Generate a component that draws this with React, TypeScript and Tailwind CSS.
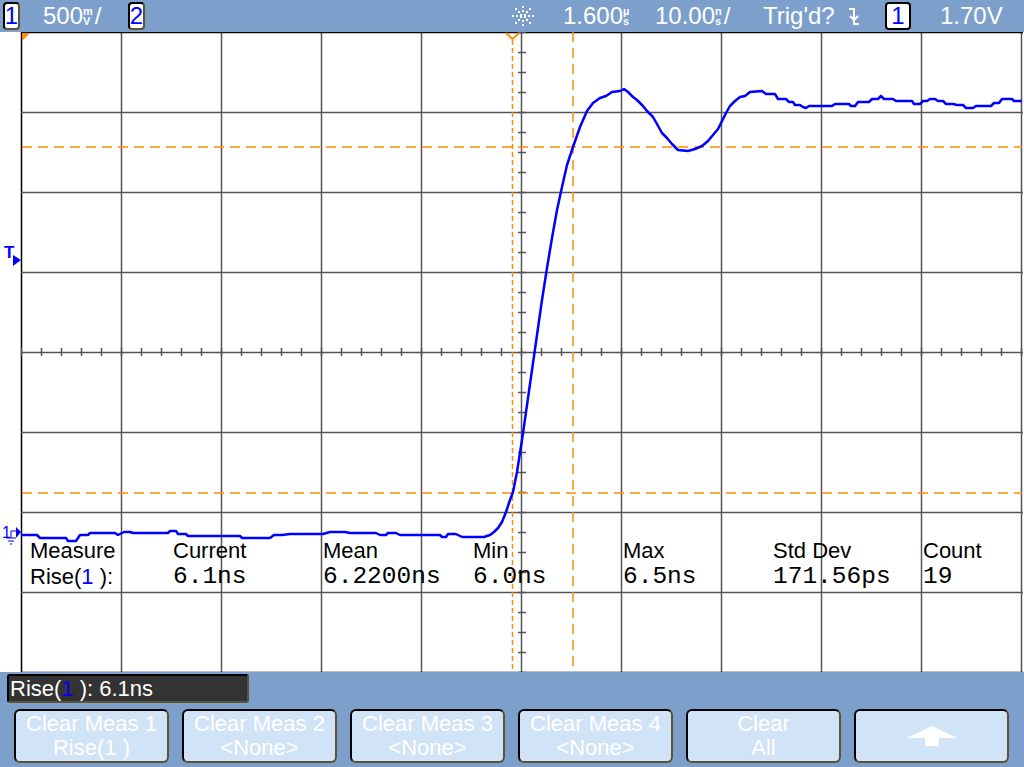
import React from "react";

const BAR = "bg-[#7c9fcc]";
const ORANGE = "#ff8c00";

// waveform samples, screen coordinates (x, y measured from top of page)
const trace: [number, number][] = [
  [21, 535], [37, 535], [40, 538], [66, 538], [68, 541], [76, 541], [80, 535], [88, 535], [90, 533],
  [115, 533], [118, 535], [124, 532], [130, 532], [133, 533], [168, 533], [170, 531], [176, 531],
  [178, 534], [186, 534], [188, 536], [240, 536], [242, 538], [270, 538], [274, 535], [282, 535],
  [290, 534], [323, 534], [330, 532], [345, 532], [350, 533], [376, 533], [380, 535], [386, 535],
  [388, 533], [396, 533], [400, 535], [440, 535], [442, 537], [446, 537], [448, 534], [456, 534],
  [462, 537], [484, 537], [490, 535], [494, 532], [498, 528], [502, 522], [506, 512], [510, 500],
  [513, 492], [517, 472], [522, 440], [527, 405], [532, 370], [537, 335], [542, 300], [547, 268],
  [552, 238], [557, 210], [562, 187], [567, 165], [573, 147], [580, 127], [587, 111], [593, 103],
  [600, 98], [606, 96], [612, 92], [620, 91], [624, 89], [628, 92], [633, 97], [637, 100],
  [643, 106], [647, 111], [653, 117], [657, 124], [662, 133], [667, 138], [672, 144], [678, 150],
  [688, 151], [695, 149], [702, 146], [708, 141], [713, 135], [718, 129], [722, 121], [726, 113],
  [730, 106], [735, 101], [740, 97], [745, 96], [750, 92], [762, 91], [766, 94], [775, 94],
  [778, 99], [786, 99], [789, 102], [793, 102], [795, 105], [800, 105], [803, 107], [806, 108],
  [809, 106], [832, 106], [835, 104], [849, 104], [851, 106], [855, 106], [858, 102], [869, 102],
  [872, 99], [878, 99], [881, 96], [884, 99], [893, 99], [896, 101], [912, 101], [914, 104],
  [920, 104], [923, 101], [927, 101], [930, 99], [935, 99], [938, 101], [943, 101], [946, 104],
  [953, 104], [957, 105], [963, 105], [966, 108], [973, 108], [976, 106], [991, 106], [994, 103],
  [999, 103], [1002, 99], [1012, 99], [1014, 101], [1022, 101],
];

const TOP = 32;
const tracePath = trace
  .map(([x, y], i) => `${i ? "L" : "M"}${x} ${y - TOP}`)
  .join(" ");

function ChanBox({ n, dark }: { n: string; dark?: boolean }) {
  return (
    <div
      className={`flex h-[28px] items-center justify-center rounded-[4px] border-2 bg-white text-[24px] leading-none text-[#0000ff] ${
        dark ? "w-[26px] border-black" : "w-[17px] border-black border-r-[#5d5531] border-b-[#5d5531]"
      }`}
    >
      {n}
    </div>
  );
}

function Stack({ top, bottom }: { top: string; bottom: string }) {
  return (
    <span className="inline-flex flex-col text-[11px] leading-[10px] font-bold">
      <span>{top}</span>
      <span>{bottom}</span>
    </span>
  );
}

function Sparkle() {
  const dots: [number, number][] = [
    [13, 2], [13, 6], [13, 16], [13, 20], [3, 11], [7, 11], [19, 11], [23, 11],
    [6, 4], [9, 7], [20, 4], [17, 7], [6, 18], [9, 15], [20, 18], [17, 15],
    [11, 10], [15, 10], [11, 12], [15, 12],
  ];
  return (
    <svg width="27" height="23" viewBox="0 0 27 23">
      {dots.map(([x, y], i) => (
        <rect key={i} x={x - 1} y={y - 1} width="2" height="2" fill="#fff" />
      ))}
    </svg>
  );
}

function Slope() {
  return (
    <svg width="11" height="19" viewBox="0 0 11 19">
      <path d="M1 2H6V17H11" stroke="#fff" strokeWidth="2" fill="none" />
      <path d="M2 9L6 13L10 9" stroke="#fff" strokeWidth="2" fill="none" />
    </svg>
  );
}

function TopBar() {
  return (
    <div className={`flex h-[32px] items-center text-[24px] leading-none text-white ${BAR}`}>
      <div className="ml-[3px]">
        <ChanBox n="1" />
      </div>
      <div className="ml-[23px] flex w-[57px] items-center whitespace-nowrap">
        500
        <Stack top="m" bottom="V" />
        <span className="ml-[2px]">/</span>
      </div>
      <div className="ml-[28px]">
        <ChanBox n="2" />
      </div>
      <div className="ml-[365px] flex w-[27px]">
        <Sparkle />
      </div>
      <div className="ml-[26px] flex w-[62px] items-center whitespace-nowrap">
        1.600
        <Stack top="µ" bottom="s" />
      </div>
      <div className="ml-[30px] flex w-[76px] items-center whitespace-nowrap">
        10.00
        <Stack top="n" bottom="s" />
        <span className="ml-[2px]">/</span>
      </div>
      <div className="ml-[32px] w-[62px] whitespace-nowrap">Trig'd?</div>
      <div className="ml-[23px] flex w-[11px]">
        <Slope />
      </div>
      <div className="ml-[26px]">
        <ChanBox n="1" dark />
      </div>
      <div className="ml-[29px] w-[60px] whitespace-nowrap">1.70V</div>
    </div>
  );
}

function Graticule() {
  const vx = Array.from({ length: 11 }, (_, i) => 21.5 + 100 * i);
  const hy = Array.from({ length: 9 }, (_, j) => 0.5 + 80 * j);
  const vTicks = Array.from({ length: 33 }, (_, k) => 0.5 + 20 * k);
  const hTicks = Array.from({ length: 51 }, (_, k) => 21.5 + 20 * k);
  return (
    <svg width="1024" height="640" viewBox="0 0 1024 640" className="block">
      {vx.map((x, i) => (
        <line key={`v${i}`} x1={x} y1={0} x2={x} y2={640} stroke={i === 0 ? "#000" : "#555"} strokeWidth="1.5" />
      ))}
      {hy.map((y, j) => (
        <line
          key={`h${j}`}
          x1={21}
          y1={y}
          x2={1023}
          y2={y}
          stroke={j === 0 || j === 8 ? "#000" : "#555"}
          strokeWidth="1.5"
        />
      ))}
      {vTicks.map((y, k) => (
        <line key={`tv${k}`} x1={518} y1={y} x2={526} y2={y} stroke="#555" strokeWidth="1.5" />
      ))}
      {hTicks.map((x, k) => (
        <line key={`th${k}`} x1={x} y1={316} x2={x} y2={324} stroke="#555" strokeWidth="1.5" />
      ))}

      {/* cursors */}
      <line x1={512.5} y1={8} x2={512.5} y2={640} stroke={ORANGE} strokeWidth="1.5" strokeDasharray="5 3" />
      <line x1={573} y1={0} x2={573} y2={640} stroke={ORANGE} strokeWidth="1.5" strokeDasharray="10 6" />
      <line x1={22} y1={115} x2={1022} y2={115} stroke={ORANGE} strokeWidth="1.5" strokeDasharray="10 6" />
      <line x1={22} y1={461} x2={1022} y2={461} stroke={ORANGE} strokeWidth="1.5" strokeDasharray="10 6" />
      <polyline points="506,1 512.5,7 519,1" fill="none" stroke={ORANGE} strokeWidth="2" />
      <polygon points="22,1 30,1 22,9" fill={ORANGE} />

      <path d={tracePath} fill="none" stroke="#0000ff" strokeWidth="2.5" strokeLinejoin="round" />

      {/* trigger level marker */}
      <text x="4" y="226" fontSize="17" fontWeight="bold" fill="#0000ff" fontFamily="Liberation Sans, sans-serif">
        T
      </text>
      <polygon points="13,223 21,228 13,234" fill="#0000ff" />

      {/* channel 1 ground marker */}
      <text x="2" y="506" fontSize="16" fill="#0000ff" fontFamily="Liberation Sans, sans-serif">
        1
      </text>
      <polygon points="16,495 21,500 16,506" fill="#0000ff" />
      <path d="M11 499V506 M6 506H16 M8 509H14 M10 512H12 M11 499H16" stroke="#0000ff" strokeWidth="1" fill="none" />
    </svg>
  );
}

const cols = [
  { label: "Measure", value: null, w: "w-[143px]" },
  { label: "Current", value: "6.1ns", w: "w-[150px]" },
  { label: "Mean", value: "6.2200ns", w: "w-[150px]" },
  { label: "Min", value: "6.0ns", w: "w-[150px]" },
  { label: "Max", value: "6.5ns", w: "w-[150px]" },
  { label: "Std Dev", value: "171.56ps", w: "w-[150px]" },
  { label: "Count", value: "19", w: "w-[90px]" },
];

function Measurements() {
  return (
    <div className="absolute left-[30px] top-[506px] flex text-black">
      {cols.map((c) => (
        <div key={c.label} className={c.w}>
          <div className="h-[26px] text-[22px] leading-[26px]">{c.label}</div>
          {c.value ? (
            <div className="h-[26px] font-['Liberation_Mono',monospace] text-[24.5px] leading-[26px]">{c.value}</div>
          ) : (
            <div className="h-[26px] text-[22px] leading-[26px]">
              Rise(<span className="text-[#0000ff]">1</span> ):
            </div>
          )}
        </div>
      ))}
    </div>
  );
}

const buttons = [
  ["Clear Meas 1", "Rise(1 )"],
  ["Clear Meas 2", "<None>"],
  ["Clear Meas 3", "<None>"],
  ["Clear Meas 4", "<None>"],
  ["Clear", "All"],
];

function SoftKeys() {
  return (
    <div className="mt-[6px] flex gap-[13px] pl-[14px]">
      {buttons.map(([a, b]) => (
        <div
          key={a}
          className="flex h-[54px] w-[155px] flex-col items-center justify-center rounded-[6px] border-2 border-black border-r-[#5d5531] border-b-[#5d5531] bg-[#d1e3f7] text-[22px] leading-[24px] text-white"
        >
          <span>{a}</span>
          <span>{b}</span>
        </div>
      ))}
      <div className="flex h-[54px] w-[155px] items-center justify-center rounded-[6px] border-2 border-black border-r-[#5d5531] border-b-[#5d5531] bg-[#d1e3f7]">
        <svg width="50" height="20" viewBox="0 0 50 20">
          <path d="M25 0L50 12H32V20H18V12H0Z" fill="#fff" />
        </svg>
      </div>
    </div>
  );
}

export default function App() {
  return (
    <div className="h-[767px] w-[1024px] overflow-hidden bg-white font-['Liberation_Sans',Arial,sans-serif]">
      <TopBar />
      <div className="relative h-[640px] bg-white">
        <Graticule />
        <Measurements />
      </div>
      <div className={`h-[95px] ${BAR} pt-[2px]`}>
        <div className="ml-[7px] flex h-[29px] w-[242px] items-center rounded-[3px] border-2 border-black border-r-[#5d5531] border-b-[#5d5531] bg-[#333] pl-[1px] text-[22px] leading-none text-white">
          Rise(<span className="text-[#0000ff]">1</span>&nbsp;): 6.1ns
        </div>
        <SoftKeys />
      </div>
    </div>
  );
}
